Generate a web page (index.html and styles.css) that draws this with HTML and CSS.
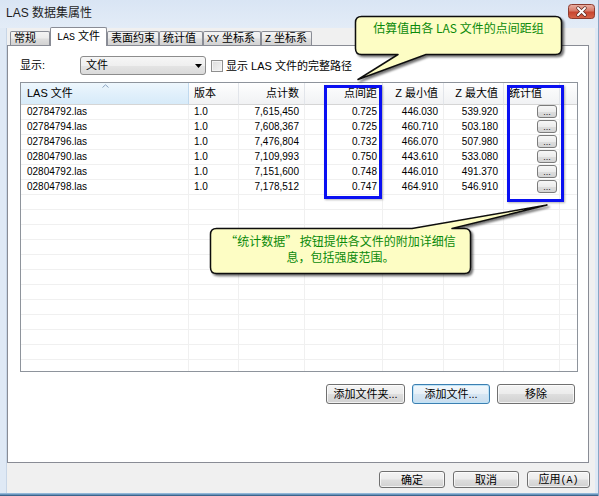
FILE: index.html
```html
<!DOCTYPE html>
<html lang="zh-CN">
<head>
<meta charset="utf-8">
<title>LAS 数据集属性</title>
<link rel="stylesheet" href="styles.css">
</head>
<body>
<div class="window">
  <div class="titlebar">
    <span class="title">LAS 数据集属性</span>
    <div class="close">
      <svg width="27" height="15" viewBox="0 0 27 15">
        <defs>
          <linearGradient id="cg" x1="0" y1="0" x2="0" y2="1">
            <stop offset="0" stop-color="#eab3a6"/>
            <stop offset="0.45" stop-color="#d77a68"/>
            <stop offset="0.55" stop-color="#c8452f"/>
            <stop offset="1" stop-color="#d8664a"/>
          </linearGradient>
        </defs>
        <rect x="0.5" y="0.5" width="26" height="14" rx="3" fill="url(#cg)" stroke="#8d3b2e"/>
        <path d="M10 4 L17 11 M17 4 L10 11" stroke="#5a2a22" stroke-width="3.4" stroke-linecap="round"/>
        <path d="M10 4 L17 11 M17 4 L10 11" stroke="#ffffff" stroke-width="2" stroke-linecap="round"/>
      </svg>
    </div>
  </div>
  <div class="client">
    <div class="tabs">
      <div class="tab w1">常规</div>
      <div class="tab active w2"><span class="mono">LAS</span> 文件</div>
      <div class="tab w3">表面约束</div>
      <div class="tab w4">统计值</div>
      <div class="tab w5"><span class="mono">XY</span> 坐标系</div>
      <div class="tab w6"><span class="mono">Z</span> 坐标系</div>
    </div>
    <div class="panel">
      <div class="showrow">
        <span class="lbl">显示:</span>
        <div class="combo">
          <span>文件</span>
          <svg class="arrow" width="7" height="4" viewBox="0 0 7 4"><path d="M0 0 H7 L3.5 4 Z" fill="#000"/></svg>
        </div>
        <div class="chk"><span class="box"></span><span>显示 LAS 文件的完整路径</span></div>
      </div>
      <div class="list">
        <div class="row head">
          <div class="c sorted">LAS 文件<svg class="sort" width="7" height="4" viewBox="0 0 7 4"><path d="M0.5 3.5 L3.5 0.8 L6.5 3.5" fill="none" stroke="#8aa4c0" stroke-width="1"/></svg></div>
          <div class="c">版本</div>
          <div class="c r">点计数</div>
          <div class="c r">点间距</div>
          <div class="c r">Z 最小值</div>
          <div class="c r">Z 最大值</div>
          <div class="c">统计值</div>
          <div class="c last"></div>
        </div>
        <div class="row"><div class="c">02784792.las</div><div class="c">1.0</div><div class="c r">7,615,450</div><div class="c r">0.725</div><div class="c r">446.030</div><div class="c r">539.920</div><div class="c btnc"><span class="dots">...</span></div><div class="c last"></div></div>
        <div class="row"><div class="c">02784794.las</div><div class="c">1.0</div><div class="c r">7,608,367</div><div class="c r">0.725</div><div class="c r">460.710</div><div class="c r">503.180</div><div class="c btnc"><span class="dots">...</span></div><div class="c last"></div></div>
        <div class="row"><div class="c">02784796.las</div><div class="c">1.0</div><div class="c r">7,476,804</div><div class="c r">0.732</div><div class="c r">466.070</div><div class="c r">507.980</div><div class="c btnc"><span class="dots">...</span></div><div class="c last"></div></div>
        <div class="row"><div class="c">02804790.las</div><div class="c">1.0</div><div class="c r">7,109,993</div><div class="c r">0.750</div><div class="c r">443.610</div><div class="c r">533.080</div><div class="c btnc"><span class="dots">...</span></div><div class="c last"></div></div>
        <div class="row"><div class="c">02804792.las</div><div class="c">1.0</div><div class="c r">7,151,600</div><div class="c r">0.748</div><div class="c r">446.010</div><div class="c r">491.370</div><div class="c btnc"><span class="dots">...</span></div><div class="c last"></div></div>
        <div class="row"><div class="c">02804798.las</div><div class="c">1.0</div><div class="c r">7,178,512</div><div class="c r">0.747</div><div class="c r">464.910</div><div class="c r">546.910</div><div class="c btnc"><span class="dots">...</span></div><div class="c last"></div></div>
        <div class="row"><div class="c"></div><div class="c"></div><div class="c"></div><div class="c"></div><div class="c"></div><div class="c"></div><div class="c"></div><div class="c last"></div></div>
        <div class="row"><div class="c"></div><div class="c"></div><div class="c"></div><div class="c"></div><div class="c"></div><div class="c"></div><div class="c"></div><div class="c last"></div></div>
        <div class="row"><div class="c"></div><div class="c"></div><div class="c"></div><div class="c"></div><div class="c"></div><div class="c"></div><div class="c"></div><div class="c last"></div></div>
        <div class="row"><div class="c"></div><div class="c"></div><div class="c"></div><div class="c"></div><div class="c"></div><div class="c"></div><div class="c"></div><div class="c last"></div></div>
        <div class="row"><div class="c"></div><div class="c"></div><div class="c"></div><div class="c"></div><div class="c"></div><div class="c"></div><div class="c"></div><div class="c last"></div></div>
        <div class="row"><div class="c"></div><div class="c"></div><div class="c"></div><div class="c"></div><div class="c"></div><div class="c"></div><div class="c"></div><div class="c last"></div></div>
        <div class="row"><div class="c"></div><div class="c"></div><div class="c"></div><div class="c"></div><div class="c"></div><div class="c"></div><div class="c"></div><div class="c last"></div></div>
        <div class="row"><div class="c"></div><div class="c"></div><div class="c"></div><div class="c"></div><div class="c"></div><div class="c"></div><div class="c"></div><div class="c last"></div></div>
        <div class="row"><div class="c"></div><div class="c"></div><div class="c"></div><div class="c"></div><div class="c"></div><div class="c"></div><div class="c"></div><div class="c last"></div></div>
        <div class="row"><div class="c"></div><div class="c"></div><div class="c"></div><div class="c"></div><div class="c"></div><div class="c"></div><div class="c"></div><div class="c last"></div></div>
        <div class="row"><div class="c"></div><div class="c"></div><div class="c"></div><div class="c"></div><div class="c"></div><div class="c"></div><div class="c"></div><div class="c last"></div></div>
        <div class="row"><div class="c"></div><div class="c"></div><div class="c"></div><div class="c"></div><div class="c"></div><div class="c"></div><div class="c"></div><div class="c last"></div></div>
      </div>
      <div class="btnrow">
        <button class="btn bw1">添加文件夹...</button>
        <button class="btn bw2 focus">添加文件...</button>
        <button class="btn bw3">移除</button>
      </div>
    </div>
    <div class="footer">
      <button class="btn fb fw1">确定</button>
      <button class="btn fb fw2">取消</button>
      <button class="btn fb fw3">应用<span class="mono">(A)</span></button>
    </div>
  </div>
  <div class="bottomedge"></div>

  <div class="hl hl1"></div>
  <div class="hl hl2"></div>

  <svg class="callouts" width="599" height="496" viewBox="0 0 599 496">
    <defs>
      <filter id="sh" x="-10%" y="-20%" width="130%" height="150%">
        <feDropShadow dx="2" dy="2" stdDeviation="1.2" flood-color="#000" flood-opacity="0.55"/>
      </filter>
    </defs>
    <path filter="url(#sh)" d="M361.5 16.5 H555.5 Q561.5 16.5 561.5 22.5 V48.5 Q561.5 54.5 555.5 54.5 H426 L358 79.5 L398 54.5 H361.5 Q355.5 54.5 355.5 48.5 V22.5 Q355.5 16.5 361.5 16.5 Z" fill="#fdfdc4" stroke="#111" stroke-width="1.5" stroke-linejoin="round"/>
    <path filter="url(#sh)" d="M216.5 228.5 H412 L547 205 L452 228.5 H464.5 Q470.5 228.5 470.5 234.5 V267.5 Q470.5 273.5 464.5 273.5 H216.5 Q210.5 273.5 210.5 267.5 V234.5 Q210.5 228.5 216.5 228.5 Z" fill="#fdfdc4" stroke="#111" stroke-width="1.5" stroke-linejoin="round"/>
  </svg>
  <div class="ctext c1">估算值由各 LAS 文件的点间距组</div>
  <div class="ctext c2">“统计数据” 按钮提供各文件的附加详细信<br>息，包括强度范围。</div>
</div>
</body>
</html>
```

FILE: styles.css
```css
html, body {
  margin: 0;
  padding: 0;
}
body {
  width: 599px;
  height: 496px;
  overflow: hidden;
  font-family: "Liberation Sans", "Noto Sans CJK SC", sans-serif;
  font-size: 11px;
  color: #000;
}
.mono {
  font-family: "Liberation Mono", "Noto Sans CJK SC", monospace;
  font-size: 10px;
}
.window {
  position: relative;
  width: 599px;
  height: 496px;
  box-sizing: border-box;
  background: #dfe9f5;
  border-right: 1px solid #8aa6c4;
  display: flex;
  flex-direction: column;
  overflow: hidden;
}
.titlebar {
  height: 28px;
  flex: none;
  box-sizing: border-box;
  padding: 4px 3px 0 6px;
  display: flex;
  justify-content: space-between;
  align-items: flex-start;
  background: linear-gradient(#d9e5f4, #e3ecf7);
}
.title {
  font-size: 12px;
  line-height: 16px;
  margin-top: 1px;
  color: #1e1e1e;
}
.close {
  width: 27px;
  height: 15px;
  flex: none;
}
.close svg { display: block; }

.client {
  flex: 1;
  margin: 0 3px 0 6px;
  background: #f0f0f0;
  display: flex;
  flex-direction: column;
  border-left: 1px solid #c8d6e7;
}
.tabs {
  height: 17px;
  flex: none;
  display: flex;
  align-items: flex-end;
  padding-left: 3px;
}
.tab {
  box-sizing: border-box;
  height: 14px;
  border: 1px solid #898c95;
  border-bottom: none;
  border-radius: 2px 2px 0 0;
  background: linear-gradient(#f4f4f4, #ececec 45%, #dedede 55%, #d2d2d2);
  padding-left: 3px;
  line-height: 13px;
  white-space: nowrap;
  overflow: hidden;
}
.tab.active {
  height: 19px;
  margin-bottom: -1px;
  background: #fff;
  position: relative;
  z-index: 1;
  padding-left: 6px;
  line-height: 17px;
}
.w1 { width: 40px; }
.w2 { width: 57px; }
.w3 { width: 52px; }
.w4 { width: 44px; }
.w5 { width: 58px; }
.w6 { width: 51px; }

.panel {
  box-sizing: border-box;
  width: 582px;
  height: 418px;
  flex: none;
  border: 1px solid #898c95;
  background: #fff;
  padding: 10px 10px 0 12px;
}
.showrow {
  height: 19px;
  display: flex;
  align-items: center;
  margin-bottom: 7px;
}
.lbl {
  width: 60px;
  flex: none;
  line-height: 19px;
}
.combo {
  box-sizing: border-box;
  width: 126px;
  height: 19px;
  flex: none;
  border: 1px solid #8c8c8c;
  border-radius: 3px;
  background: linear-gradient(#f6f6f6, #efefef 50%, #e4e4e4 51%, #dadada);
  display: flex;
  align-items: center;
  justify-content: space-between;
  padding: 0 3px 0 5px;
  line-height: 17px;
}
.arrow { display: block; }
.chk {
  display: flex;
  align-items: center;
  margin-left: 5px;
  line-height: 14px;
}
.box {
  box-sizing: border-box;
  width: 12px;
  height: 12px;
  border: 1px solid #8f8f8f;
  background: linear-gradient(135deg, #dcdcdc, #f4f4f4);
  box-shadow: inset 0 0 0 1px #f4f4f4;
  margin-right: 3px;
}

.list {
  box-sizing: border-box;
  height: 290px;
  border: 1px solid #8e949c;
  overflow: hidden;
  background: #fff;
}
.row {
  display: grid;
  grid-template-columns: 168px 50px 66px 78px 61px 60px 56px 1fr;
  height: 15px;
}
.row .c {
  box-sizing: border-box;
  border-right: 1px solid #f0f0f0;
  border-bottom: 1px solid #f0f0f0;
  font-size: 10px;
  line-height: 14px;
  padding-left: 5px;
  white-space: nowrap;
  overflow: hidden;
}
.row .c:first-child { padding-left: 6px; }
.row .c.r {
  text-align: right;
  padding-left: 0;
  padding-right: 5px;
}
.row .c.last { border-right: none; }
.row.head {
  height: 22px;
}
.row.head .c {
  font-size: 11px;
  line-height: 21px;
  background: linear-gradient(#ffffff, #f7f8f9 50%, #f1f2f4);
  border-right: 1px solid #e2e5ea;
  border-bottom: 1px solid #d5d5d5;
}
.row.head .c.sorted {
  position: relative;
  background: linear-gradient(#eef7fd, #e1f0fb 50%, #d7ebf9);
  border-right: 1px solid #c0d9ee;
}
.row.head .c.last { border-right: none; }
.sort {
  position: absolute;
  left: 81px;
  top: 1px;
}
.btnc {
  display: flex;
  justify-content: flex-end;
  padding-right: 2px;
}
.dots {
  box-sizing: border-box;
  width: 20px;
  height: 13px;
  margin-top: 0;
  border: 1px solid #7b7b7b;
  border-radius: 3px;
  background: linear-gradient(#f7f7f7, #ececec 50%, #dedede 51%, #d4d4d4);
  font-size: 9px;
  line-height: 13px;
  text-align: center;
  color: #222;
}

.btnrow {
  display: flex;
  justify-content: flex-end;
  gap: 7px;
  margin-top: 12px;
  padding-right: 3px;
}
.btn {
  box-sizing: border-box;
  height: 20px;
  border: 1px solid #707070;
  border-radius: 3px;
  background: linear-gradient(#f4f4f4, #ececec 48%, #dedede 52%, #d1d1d1);
  font-family: "Liberation Sans", "Noto Sans CJK SC", sans-serif;
  font-size: 11px;
  line-height: 17px;
  padding: 0;
  color: #000;
  box-shadow: inset 0 0 0 1px rgba(255,255,255,0.7);
}
.btn.focus {
  border-color: #3c7fb1;
  box-shadow: inset 0 0 0 1px #bfe4f8;
  background: linear-gradient(#f2f8fc, #e6f0f8 48%, #d6e6f3 52%, #c9ddee);
}
.bw1 { width: 79px; }
.bw2 { width: 78px; }
.bw3 { width: 78px; }

.footer {
  display: flex;
  justify-content: flex-end;
  gap: 8px;
  margin-top: 8px;
  padding-right: 5px;
}
.fb {
  height: 17px;
  line-height: 14px;
}
.fw1 { width: 66px; }
.fw2 { width: 66px; }
.fw3 { width: 63px; }

.bottomedge {
  height: 3px;
  flex: none;
  background: linear-gradient(#a8c9e6, #5d8ab3 60%, #23496f);
}

.hl {
  position: absolute;
  box-sizing: border-box;
  border: 3px solid #0a10f2;
  box-shadow: 1px 1px 2px rgba(0,0,0,0.3);
}
.hl1 { left: 324px; top: 85px; width: 58px; height: 114px; }
.hl2 { left: 507px; top: 85px; width: 57px; height: 117px; }

.callouts {
  position: absolute;
  left: 0;
  top: 0;
  pointer-events: none;
}
.ctext {
  position: absolute;
  color: #0a8a0a;
  font-family: "Noto Sans CJK SC", "Liberation Sans", sans-serif;
  font-size: 12px;
  line-height: 16px;
  text-align: center;
  white-space: nowrap;
}
.c1 { left: 356px; top: 20px; width: 205px; }
.c2 { left: 211px; top: 233px; width: 259px; }
```
